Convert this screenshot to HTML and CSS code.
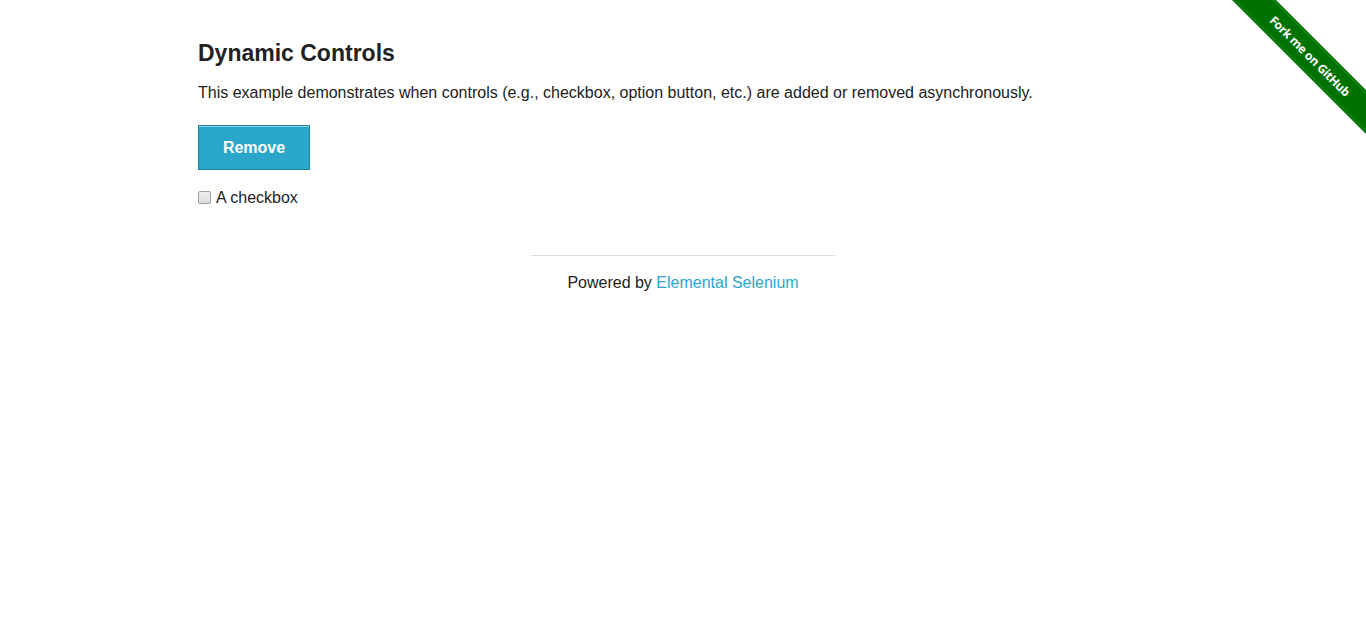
FILE: index.html
```html
<!DOCTYPE html>
<html>
<head>
<meta charset="utf-8">
<title>The Internet</title>
<link rel="stylesheet" href="styles.css">
</head>
<body>
<a class="ribbon" href="#">
  <svg width="149" height="149" viewBox="0 0 149 149">
    <polygon points="15,0 59,0 149,90 149,134" fill="#007200"/>
    <line x1="18" y1="0" x2="149" y2="131" stroke="#2f8f2f" stroke-width="1"/>
    <line x1="56" y1="0" x2="149" y2="93" stroke="#2f8f2f" stroke-width="1"/>
    <text x="0" y="0" transform="translate(93 56) rotate(45)" text-anchor="middle" dominant-baseline="central" class="ribbon-text">Fork me on GitHub</text>
  </svg>
</a>
<div class="page">
  <div class="example">
    <h3 class="title">Dynamic Controls</h3>
    <p class="desc">This example demonstrates when controls (e.g., checkbox, option button, etc.) are added or removed asynchronously.</p>
    <form class="checkbox-form">
      <button type="button" class="btn">Remove</button>
      <div class="check-row">
        <input type="checkbox" class="check">
        <span class="check-label">A checkbox</span>
      </div>
    </form>
  </div>
  <div class="footer">
    <hr class="rule">
    <div class="powered">Powered by <a href="#" class="link">Elemental Selenium</a></div>
  </div>
</div>
</body>
</html>
```
FILE: styles.css
```css
html, body {
  margin: 0;
  padding: 0;
  background: #ffffff;
}
body {
  font-family: "Liberation Sans", Arial, sans-serif;
  color: #222222;
}
.ribbon {
  position: absolute;
  top: 0;
  right: 0;
  display: block;
  width: 149px;
  height: 149px;
}
.ribbon svg {
  display: block;
}
.ribbon-text {
  fill: #ffffff;
  font-family: "Open Sans", "DejaVu Sans", sans-serif;
  font-weight: bold;
  font-size: 12px;
  letter-spacing: -0.3px;
}
.page {
  width: 970px;
  margin: 0 auto;
}
.example {
  padding-top: 39px;
}
.title {
  margin: 0;
  font-size: 23px;
  line-height: 28px;
  font-weight: bold;
  color: #222222;
}
.desc {
  margin: 15px 0 0;
  font-size: 16px;
  line-height: 22px;
}
.checkbox-form {
  margin-top: 21px;
}
.btn {
  display: block;
  width: 112px;
  height: 45px;
  padding: 0;
  background: #2ba6cb;
  border: 1px solid #2284a1;
  box-shadow: inset 0 1px 0 rgba(255,255,255,0.5);
  color: #ffffff;
  font-family: "Liberation Sans", Arial, sans-serif;
  font-size: 16px;
  font-weight: bold;
  cursor: pointer;
}
.check-row {
  display: flex;
  align-items: center;
  margin-top: 18px;
  height: 20px;
}
.check {
  -webkit-appearance: none;
  appearance: none;
  margin: 0 5px 0 0;
  width: 13px;
  height: 13px;
  border: 1px solid #a0a0a0;
  border-radius: 2px;
  background: linear-gradient(#f0f0f0, #dcdcdc);
  position: relative;
  top: -1px;
}
.check-label {
  font-size: 16px;
}
.footer {
  width: 304px;
  margin: 47px auto 0;
}
.rule {
  margin: 0;
  border: 0;
  border-top: 1px solid #dddddd;
  height: 0;
}
.powered {
  margin-top: 17px;
  text-align: center;
  font-size: 16px;
  line-height: 20px;
}
.link {
  color: #2ba6cb;
  text-decoration: none;
}
```
